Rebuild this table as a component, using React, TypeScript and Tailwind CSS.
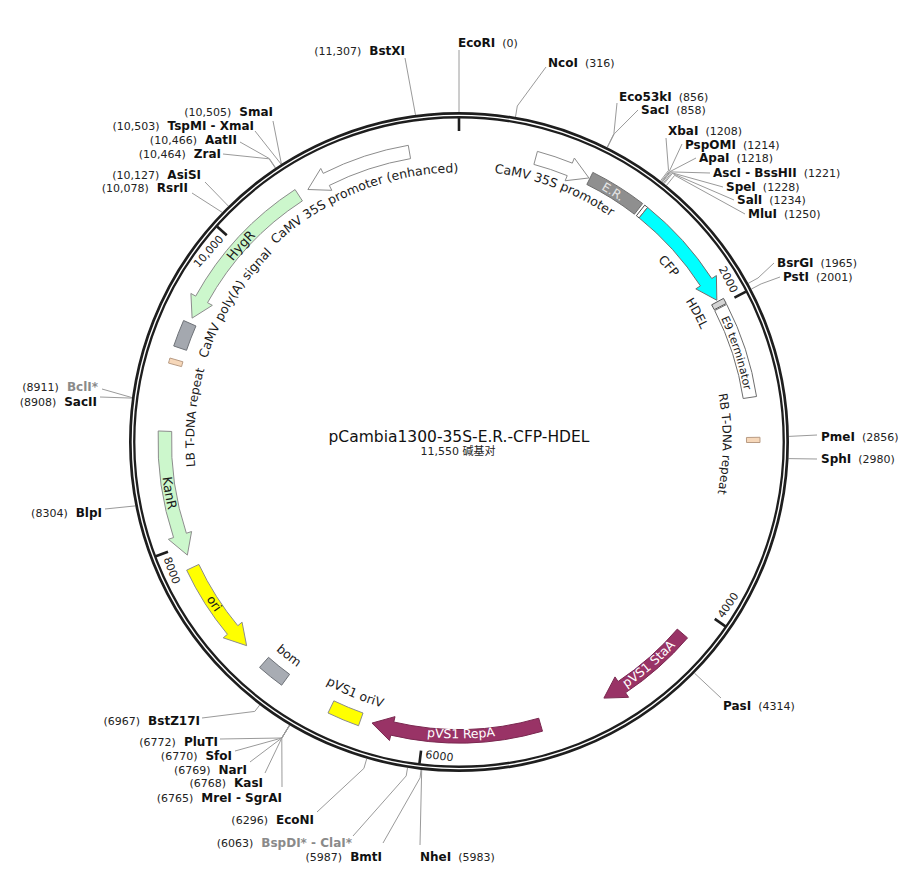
import React from 'react';

const CX = 459;
const CY = 442;
const FONT = '"DejaVu Sans", Verdana, sans-serif';

type Pt = [number, number];

const pt = (r: number, a: number): Pt => {
  const t = (a * Math.PI) / 180;
  return [CX + r * Math.sin(t), CY - r * Math.cos(t)];
};
const p = (q: Pt) => `${q[0].toFixed(2)} ${q[1].toFixed(2)}`;

const R0 = 287.5;
const R1 = 301;
const RM = (R0 + R1) / 2;

// annular arrow from a (tail) to b (tip)
const arrowPath = (a: number, b: number, head = 21, e = 5.5) => {
  const dir = b > a ? 1 : -1;
  const h = ((head / RM) * 180) / Math.PI;
  const base = Math.abs(b - a) > h ? b - dir * h : a;
  const sweep = dir > 0 ? 1 : 0;
  const large = Math.abs(base - a) > 180 ? 1 : 0;
  return [
    `M ${p(pt(R1, a))}`,
    `A ${R1} ${R1} 0 ${large} ${sweep} ${p(pt(R1, base))}`,
    `L ${p(pt(R1 + e, base))}`,
    `L ${p(pt(RM, b))}`,
    `L ${p(pt(R0 - e, base))}`,
    `L ${p(pt(R0, base))}`,
    `A ${R0} ${R0} 0 ${large} ${1 - sweep} ${p(pt(R0, a))}`,
    'Z',
  ].join(' ');
};

const boxPath = (a: number, b: number) =>
  [
    `M ${p(pt(R1, a))}`,
    `A ${R1} ${R1} 0 0 1 ${p(pt(R1, b))}`,
    `L ${p(pt(R0, b))}`,
    `A ${R0} ${R0} 0 0 0 ${p(pt(R0, a))}`,
    'Z',
  ].join(' ');

type Feature = { kind: 'arrow' | 'box'; a: number; b: number; fill: string; stroke: string };

const GREEN = '#ccf7cc';
const MAROON = '#993366';

const features: Feature[] = [
  { kind: 'arrow', a: 350.3, b: 329.1, fill: '#ffffff', stroke: '#8c8c8c' },
  { kind: 'arrow', a: 15.1, b: 26.2, fill: '#ffffff', stroke: '#8c8c8c' },
  { kind: 'box', a: 26.4, b: 37.6, fill: '#8f8f8f', stroke: '#6e6e6e' },
  { kind: 'box', a: 38.1, b: 38.8, fill: '#ffffff', stroke: '#444444' },
  { kind: 'arrow', a: 38.8, b: 61.2, fill: '#00ffff', stroke: '#6e6e6e' },
  { kind: 'box', a: 61.5, b: 62.6, fill: '#d4d4d4', stroke: '#555555' },
  { kind: 'box', a: 62.8, b: 81.3, fill: '#ffffff', stroke: '#6e6e6e' },
  { kind: 'box', a: 89.1, b: 90.1, fill: '#f6d7b9', stroke: '#b99c84' },
  { kind: 'arrow', a: 130.6, b: 150.5, fill: MAROON, stroke: '#7a2850' },
  { kind: 'arrow', a: 163.9, b: 197.2, fill: MAROON, stroke: '#7a2850' },
  { kind: 'box', a: 199.5, b: 205.8, fill: '#ffff00', stroke: '#8c8c8c' },
  { kind: 'box', a: 216.1, b: 221.5, fill: '#a8acb3', stroke: '#6e7278' },
  { kind: 'arrow', a: 244.8, b: 226.2, fill: '#ffff00', stroke: '#8c8c8c' },
  { kind: 'arrow', a: 272.1, b: 247.4, fill: GREEN, stroke: '#8c8c8c' },
  { kind: 'box', a: 285.2, b: 286.2, fill: '#f6d7b9', stroke: '#b99c84' },
  { kind: 'box', a: 288.6, b: 293.8, fill: '#a4a8af', stroke: '#6e7278' },
  { kind: 'arrow', a: 327, b: 294.9, fill: GREEN, stroke: '#8c8c8c' },
];

type ArcLabel = { t: string; a: number; r: number; cw: boolean; fs: number; fill?: string };

const arcLabels: ArcLabel[] = [
  { t: 'CaMV 35S promoter (enhanced)', a: 338.5, r: 274, cw: true, fs: 12.5 },
  { t: 'CaMV 35S promoter', a: 20.7, r: 276, cw: true, fs: 12.5 },
  { t: 'E.R.', a: 31.6, r: 294, cw: true, fs: 12, fill: '#e6e6e6' },
  { t: 'CFP', a: 50, r: 274, cw: true, fs: 12.5 },
  { t: 'HDEL', a: 61.6, r: 271, cw: true, fs: 12 },
  { t: 'E9 terminator', a: 72.2, r: 293.5, cw: true, fs: 11 },
  { t: 'RB T-DNA repeat', a: 90.4, r: 268, cw: true, fs: 12 },
  { t: 'pVS1 StaA', a: 139.5, r: 293, cw: false, fs: 12.5, fill: '#ffffff' },
  { t: 'pVS1 RepA', a: 179.6, r: 292, cw: false, fs: 12.5, fill: '#ffffff' },
  { t: 'pVS1 oriV', a: 202.5, r: 272, cw: false, fs: 12.5 },
  { t: 'bom', a: 218.5, r: 273, cw: false, fs: 12.5 },
  { t: 'ori', a: 236.6, r: 293, cw: false, fs: 12.5 },
  { t: 'KanR', a: 260, r: 294, cw: false, fs: 13 },
  { t: 'LB T-DNA repeat', a: 275.3, r: 269, cw: true, fs: 12 },
  { t: 'CaMV poly(A) signal', a: 301.8, r: 270, cw: true, fs: 12.5 },
  { t: 'HygR', a: 312, r: 294, cw: true, fs: 13 },
];

const labelArc = (l: ArcLabel) => {
  const span = 80;
  const rb = l.cw ? l.r - 0.35 * l.fs : l.r + 0.35 * l.fs;
  const from = l.cw ? l.a - span : l.a + span;
  const to = l.cw ? l.a + span : l.a - span;
  return `M ${p(pt(rb, from))} A ${rb} ${rb} 0 0 ${l.cw ? 1 : 0} ${p(pt(rb, to))}`;
};

type Site = {
  pts: Pt[];
  x: number;
  y: number;
  end?: boolean;
  name: string;
  pos: string;
  gray?: boolean;
};

const radial = (a: number, r2: number, end: Pt): Pt[] => [pt(330, a), pt(r2, a), end];
const direct = (a: number, end: Pt): Pt[] => [pt(330, a), end];

const cluster1 = 210.9;
const conv = pt(345, cluster1);

const sites: Site[] = [
  { pts: direct(0, [459, 50]), x: 458, y: 47, name: 'EcoRI', pos: '(0)' },
  { pts: radial(9.85, 341, [546, 67]), x: 548, y: 67, name: 'NcoI', pos: '(316)' },
  { pts: radial(26.68, 345, [617, 103]), x: 619, y: 101, name: 'Eco53kI', pos: '(856)' },
  { pts: radial(26.74, 345, [638, 110]), x: 641, y: 114, name: 'SacI', pos: '(858)' },
  { pts: radial(37.65, 343, [666, 138]), x: 668, y: 135, name: 'XbaI', pos: '(1208)' },
  { pts: radial(37.84, 343, [682, 144]), x: 685, y: 149, name: 'PspOMI', pos: '(1214)' },
  { pts: radial(37.97, 343, [696, 158]), x: 699, y: 162, name: 'ApaI', pos: '(1218)' },
  { pts: radial(38.06, 343, [710, 173]), x: 713, y: 177, name: 'AscI - BssHII', pos: '(1221)' },
  { pts: radial(38.28, 343, [723, 187]), x: 726, y: 191, name: 'SpeI', pos: '(1228)' },
  { pts: radial(38.46, 343, [734, 200]), x: 737, y: 204, name: 'SalI', pos: '(1234)' },
  { pts: radial(38.96, 343, [745, 214]), x: 748, y: 218, name: 'MluI', pos: '(1250)' },
  { pts: radial(61.25, 341, [774, 263]), x: 777, y: 267, name: 'BsrGI', pos: '(1965)' },
  { pts: radial(62.37, 341, [780, 277]), x: 783, y: 281, name: 'PstI', pos: '(2001)' },
  { pts: direct(89.02, [817, 435]), x: 821, y: 441, name: 'PmeI', pos: '(2856)' },
  { pts: direct(92.88, [817, 459]), x: 821, y: 463, name: 'SphI', pos: '(2980)' },
  { pts: direct(134.47, [721, 698]), x: 723, y: 710, name: 'PasI', pos: '(4314)' },
  { pts: direct(186.49, [420, 845]), x: 420, y: 861, name: 'NheI', pos: '(5983)' },
  { pts: radial(186.61, 338, [383, 843]), x: 382, y: 861, end: true, name: 'BmtI', pos: '(5987)' },
  { pts: radial(188.98, 338, [353, 836]), x: 352, y: 847, end: true, name: 'BspDI* - ClaI*', pos: '(6063)', gray: true },
  { pts: radial(196.24, 340, [317, 812]), x: 314, y: 824, end: true, name: 'EcoNI', pos: '(6296)' },
  { pts: [pt(330, 210.93), conv, [220, 739]], x: 218, y: 746, end: true, name: 'PluTI', pos: '(6772)' },
  { pts: [pt(330, 210.91), conv, [235, 751]], x: 232, y: 760, end: true, name: 'SfoI', pos: '(6770)' },
  { pts: [pt(330, 210.88), conv, [250, 762]], x: 247, y: 774, end: true, name: 'NarI', pos: '(6769)' },
  { pts: [pt(330, 210.87), conv, [265, 773]], x: 263, y: 787, end: true, name: 'KasI', pos: '(6768)' },
  { pts: [pt(330, 210.86), conv, [282, 787]], x: 282, y: 802, end: true, name: 'MreI - SgrAI', pos: '(6765)' },
  { pts: radial(217.16, 338, [202, 718]), x: 200, y: 725, end: true, name: 'BstZ17I', pos: '(6967)' },
  { pts: direct(258.83, [105, 509]), x: 102, y: 517, end: true, name: 'BlpI', pos: '(8304)' },
  { pts: direct(277.65, [100, 397]), x: 97, y: 406, end: true, name: 'SacII', pos: '(8908)' },
  { pts: direct(277.74, [102, 389]), x: 98, y: 391, end: true, name: 'BclI*', pos: '(8911)', gray: true },
  { pts: direct(314.12, [192, 193]), x: 188, y: 192, end: true, name: 'RsrII', pos: '(10,078)' },
  { pts: direct(315.65, [205, 182]), x: 201, y: 179, end: true, name: 'AsiSI', pos: '(10,127)' },
  { pts: radial(326.15, 341, [223, 154]), x: 221, y: 158, end: true, name: 'ZraI', pos: '(10,464)' },
  { pts: radial(326.21, 341, [240, 142]), x: 237, y: 144, end: true, name: 'AatII', pos: '(10,466)' },
  { pts: direct(327.37, [255, 131]), x: 254, y: 130, end: true, name: 'TspMI - XmaI', pos: '(10,503)' },
  { pts: direct(327.43, [273, 121]), x: 273, y: 116, end: true, name: 'SmaI', pos: '(10,505)' },
  { pts: direct(352.43, [405, 58]), x: 405, y: 55, end: true, name: 'BstXI', pos: '(11,307)' },
];

const ticks = [
  { bp: 0, label: '' },
  { bp: 2000, label: '2000' },
  { bp: 4000, label: '4000' },
  { bp: 6000, label: '6000' },
  { bp: 8000, label: '8000' },
  { bp: 10000, label: '10,000' },
];

const SiteLabel = ({ s }: { s: Site }) => {
  const nameFill = s.gray ? '#8a8a8a' : '#111';
  return (
    <text x={s.x} y={s.y} textAnchor={s.end ? 'end' : 'start'} fontFamily={FONT}>
      {s.end ? (
        <>
          <tspan fontSize={11} fill="#222">
            {s.pos}
          </tspan>
          <tspan dx={8} fontWeight="bold" fontSize={12} fill={nameFill}>
            {s.name}
          </tspan>
        </>
      ) : (
        <>
          <tspan fontWeight="bold" fontSize={12} fill={nameFill}>
            {s.name}
          </tspan>
          <tspan dx={7} fontSize={11} fill="#222">
            {s.pos}
          </tspan>
        </>
      )}
    </text>
  );
};

const PlasmidMap = () => (
  <svg width={916} height={873} viewBox="0 0 916 873" className="block">
    <defs>
      {arcLabels.map((l, i) => (
        <path key={i} id={`lbl-${i}`} d={labelArc(l)} fill="none" />
      ))}
    </defs>

    {/* leader lines */}
    {sites.map((s, i) => (
      <polyline
        key={i}
        points={s.pts.map((q) => `${q[0].toFixed(1)},${q[1].toFixed(1)}`).join(' ')}
        fill="none"
        stroke="#9a9a9a"
        strokeWidth={1}
      />
    ))}

    {/* backbone */}
    <circle cx={CX} cy={CY} r={326.8} fill="none" stroke="#1e1e1e" strokeWidth={6.4} />
    <circle cx={CX} cy={CY} r={326.6} fill="none" stroke="#ffffff" strokeWidth={1.4} />

    {/* ticks */}
    {ticks.map((t) => {
      const a = (t.bp / 11550) * 360;
      const top = a < 90 || a > 270;
      const la = a - 0.9;
      const q = pt(314, la);
      const rot = top ? (a > 180 ? a - 360 : a) : a - 180;
      return (
        <g key={t.bp}>
          <line
            x1={pt(324, a)[0]}
            y1={pt(324, a)[1]}
            x2={pt(311, a)[0]}
            y2={pt(311, a)[1]}
            stroke="#1e1e1e"
            strokeWidth={2.6}
          />
          {t.label && (
            <text
              transform={`translate(${q[0].toFixed(2)} ${q[1].toFixed(2)}) rotate(${rot.toFixed(2)})`}
              y={3.8}
              textAnchor={top ? 'end' : 'start'}
              fontFamily={FONT}
              fontSize={11}
              fill="#222"
            >
              {t.label}
            </text>
          )}
        </g>
      );
    })}

    {/* features */}
    {features.map((f, i) => (
      <path
        key={i}
        d={f.kind === 'arrow' ? arrowPath(f.a, f.b) : boxPath(f.a, f.b)}
        fill={f.fill}
        stroke={f.stroke}
        strokeWidth={1}
        strokeLinejoin="miter"
      />
    ))}

    {/* feature labels */}
    {arcLabels.map((l, i) => (
      <text key={i} fontFamily={FONT} fontSize={l.fs} fill={l.fill ?? '#1a1a1a'}>
        <textPath href={`#lbl-${i}`} startOffset="50%" textAnchor="middle">
          {l.t}
        </textPath>
      </text>
    ))}

    {/* site labels */}
    {sites.map((s, i) => (
      <SiteLabel key={i} s={s} />
    ))}

    {/* title */}
    <text x={459} y={442} textAnchor="middle" fontFamily={FONT} fontSize={15.5} fill="#111">
      pCambia1300-35S-E.R.-CFP-HDEL
    </text>
    <text
      x={458}
      y={455}
      textAnchor="middle"
      fontFamily={`"DejaVu Sans", "Noto Sans CJK SC", sans-serif`}
      fontSize={11}
      fill="#222"
    >
      11,550 碱基对
    </text>
  </svg>
);

export default function App() {
  return (
    <div className="w-[916px] h-[873px] bg-white overflow-hidden">
      <PlasmidMap />
    </div>
  );
}
